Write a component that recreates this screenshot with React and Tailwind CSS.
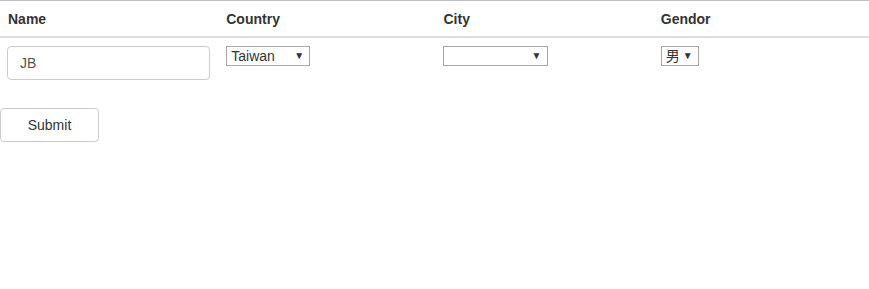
import React from 'react';

const Select = ({ value, width }) => (
    <div
        className="relative flex items-center h-[20px] border border-[#a6a6a6] bg-white text-[14px] text-[#333] leading-none"
        style={{ width }}
    >
        <span className="pl-[4px]">{value}</span>
        <span className="absolute right-[5px] top-[4px] text-[10px] leading-none text-[#333]">▼</span>
    </div>
);

export default function App() {
    const headers = ['Name', 'Country', 'City', 'Gendor'];
    return (
        <div
            className="w-[869px] h-[289px] bg-white text-[14px] text-[#333]"
            style={{ fontFamily: '"Liberation Sans", Arial, "Noto Sans CJK SC", sans-serif' }}
        >
            <table className="w-full border-collapse mb-[20px] table-fixed">
                <thead>
                    <tr className="border-t border-[#bdbdbd]">
                        {headers.map((h, i) => (
                            <th
                                key={h}
                                className={
                                    i === 0
                                        ? 'text-left font-bold pt-[8px] pb-[7px] px-[8px] leading-[20px] border-b-2 border-[#ddd] align-bottom'
                                        : 'text-left font-bold pt-[8px] pb-[7px] pl-[9px] pr-[8px] leading-[20px] border-b-2 border-[#ddd] align-bottom'
                                }
                            >
                                {h}
                            </th>
                        ))}
                    </tr>
                </thead>
                <tbody>
                    <tr>
                        <td className="px-[7px] py-[8px] align-top">
                            <input
                                defaultValue="JB"
                                className="w-[203px] h-[34px] px-[12px] border border-[#ccc] rounded-[4px] text-[14px] text-[#555] outline-none"
                            />
                        </td>
                        <td className="pl-[9px] pr-[8px] py-[8px] align-top">
                            <Select value="Taiwan" width={84} />
                        </td>
                        <td className="p-[8px] align-top">
                            <Select value="" width={105} />
                        </td>
                        <td className="pl-[9px] pr-[8px] py-[8px] align-top">
                            <Select value="男" width={38} />
                        </td>
                    </tr>
                </tbody>
            </table>
            <button className="w-[99px] h-[34px] border border-[#ccc] rounded-[4px] bg-white text-[14px] text-[#333]">
                Submit
            </button>
        </div>
    );
}
